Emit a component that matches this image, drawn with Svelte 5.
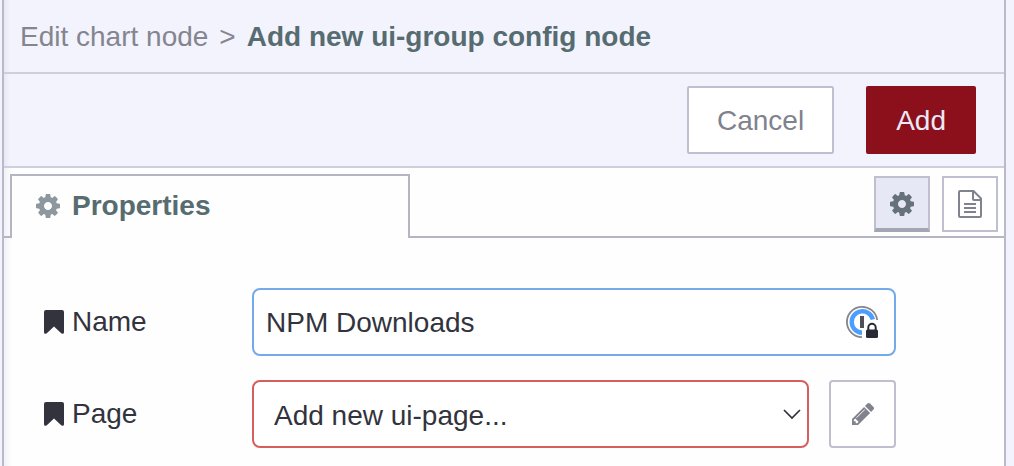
<script>
  let name = $state('NPM Downloads');
  let page = $state('new');
  let view = $state('properties');
</script>

{#snippet cog()}
  <svg class="cog" viewBox="128 128 1536 1536" aria-hidden="true">
    <path d="M1152 896q0-106-75-181t-181-75-181 75-75 181 75 181 181 75 181-75 75-181zm512-109v222q0 12-8 23t-20 13l-185 28q-19 54-39 91 35 50 107 138 10 12 10 25t-9 23q-27 37-99 108t-94 71q-12 0-26-9l-138-108q-44 23-91 38-16 136-29 186-7 28-36 28h-222q-14 0-24.500-8.500t-11.500-21.500l-28-184q-49-16-90-37l-141 107q-10 9-25 9-14 0-25-11-126-114-165-168-7-10-7-23 0-12 8-23 15-21 51-66.500t54-70.500q-27-50-41-99l-183-27q-13-2-21-12.500t-8-23.500v-222q0-12 8-23t19-13l186-28q14-46 39-92-40-57-107-138-10-12-10-24 0-10 9-23 26-36 98.500-107.500t94.500-71.500q13 0 26 10l138 107q44-23 91-38 16-136 29-186 7-28 36-28h222q14 0 24.500 8.500t11.500 21.500l28 184q49 16 90 37l142-107q9-9 24-9 13 0 25 10 129 119 165 170 7 8 7 22 0 12-8 23-15 21-51 66.500t-54 70.500q26 50 41 98l183 28q13 2 21 12.500t8 23.500z" />
  </svg>
{/snippet}

{#snippet bookmark()}
  <svg class="bookmark" viewBox="0 0 20 24" aria-hidden="true">
    <path d="M2 0h16q2 0 2 2v20.300q0 1.700-1.700 1.500-.6-.1-1.100-.5L10 16.500l-7.200 6.800q-.5.400-1.100.5Q0 24 0 22.300V2q0-2 2-2z" />
  </svg>
{/snippet}

<main class="tray">
  <header class="crumbs">
    <span>Edit chart node</span>
    <span>&gt;</span>
    <b>Add new ui-group config node</b>
  </header>

  <div class="toolbar">
    <button class="action" type="button">Cancel</button>
    <button class="action primary" type="button">Add</button>
  </div>

  <nav class="tabs">
    <span class="edge"></span>
    <a class="tab" href="#properties">{@render cog()}Properties</a>
    <div class="tools">
      <button class="tool" class:selected={view === 'properties'} type="button" aria-label="Properties" onclick={() => (view = 'properties')}>
        {@render cog()}
      </button>
      <button class="tool" class:selected={view === 'description'} type="button" aria-label="Description" onclick={() => (view = 'description')}>
        <svg class="doc" viewBox="0 0 24 28" aria-hidden="true">
          <path d="M2 1h13.500L23 8.500V26q0 1-1 1H2q-1 0-1-1V2q0-1 1-1zM15 1v8q0 1 1 1h7M6 14h12M6 18h12M6 22h12" />
        </svg>
      </button>
    </div>
  </nav>

  <form class="form" id="properties">
    <div class="row">
      <label for="name">{@render bookmark()}Name</label>
      <div class="field">
        <input id="name" class="control" type="text" autocomplete="off" bind:value={name} />
        <svg class="vault" viewBox="0 0 34 34" aria-hidden="true">
          <path class="ring" d="M31.200 15A15.200 15.200 0 1 0 16 32.200" />
          <path class="disc" d="M26.800 14.500A10.700 10.700 0 1 0 16 27.700" />
          <path class="slot" d="M14 11h4v12h-4z" />
          <path class="shackle" d="M22.300 25v-2.500a3.700 3.700 0 0 1 7.400 0V25" />
          <rect class="body" x="20" y="24.500" width="12" height="8.500" rx="1.500" />
        </svg>
      </div>
    </div>

    <div class="row">
      <label for="page">{@render bookmark()}Page</label>
      <div class="field">
        <select id="page" class="control invalid" bind:value={page}>
          <option value="new">Add new ui-page...</option>
        </select>
        <svg class="chevron" viewBox="0 0 18 12" aria-hidden="true"><path d="M1 2l8 8 8-8" /></svg>
      </div>
      <button class="edit" type="button" aria-label="Edit page">
        <svg viewBox="128 149 1515 1515" aria-hidden="true">
          <path d="M491 1536l91-91-235-235-91 91v107h128v128h107zm523-928q0-22-22-22-10 0-17 7l-542 542q-7 7-7 17 0 22 22 22 10 0 17-7l542-542q7-7 7-17zm-54-192l416 416-832 832h-416v-416zm683 96q0 53-37 90l-166 166-416-416 166-165q36-38 90-38 53 0 91 38l235 234q37 39 37 91z" />
        </svg>
      </button>
    </div>
  </form>
</main>

<style>
  :global(body) {
    margin: 0;
    background: #f3f3fd;
  }

  .tray {
    box-sizing: border-box;
    min-height: 100vh;
    margin: 0 8px 0 2px;
    border: solid #b9b9c9;
    border-width: 0 2px;
    background: linear-gradient(to right, #f0f0f8, #fefefe 8px);
    color: #32333d;
    font: 28px/32px "Liberation Sans", Arial, sans-serif;
  }

  svg {
    display: block;
    flex: none;
    fill: currentColor;
  }

  button,
  input,
  select {
    box-sizing: border-box;
    margin: 0;
    font: inherit;
    color: inherit;
    outline: none;
  }

  button {
    display: flex;
    align-items: center;
    justify-content: center;
    padding: 0;
    border: 2px solid #bfbfcf;
    background: #fff;
    color: #80828d;
    cursor: pointer;
  }

  .crumbs,
  .toolbar {
    border-bottom: 2px solid #cfcfdb;
    background: linear-gradient(to right, #e8e8f6, #f3f3fd 6px);
  }

  .crumbs {
    display: flex;
    gap: 11px;
    padding: 21px 16px 19px;
    color: #85858f;
  }

  .crumbs b {
    color: #566c70;
  }

  .toolbar {
    display: flex;
    justify-content: flex-end;
    gap: 32px;
    padding: 12px 28px;
  }

  .action {
    height: 68px;
    padding: 2px 28px 0;
    border-radius: 2px;
  }

  .primary {
    border-color: #8c101c;
    background: #8c101c;
    color: #e9e9f7;
  }

  .tabs {
    display: flex;
    align-items: stretch;
    padding-top: 6px;
  }

  .edge {
    width: 6px;
    border-bottom: 2px solid #b5b5c3;
  }

  .tab {
    box-sizing: border-box;
    display: flex;
    align-items: center;
    gap: 12px;
    width: 40%;
    height: 64px;
    padding: 0 24px 2px;
    border: solid #b5b5c3;
    border-width: 2px 2px 0;
    background: #fefefe;
    color: #566c70;
    font-weight: bold;
    text-decoration: none;
  }

  .cog {
    width: 24px;
    height: 24px;
  }

  .tab .cog {
    color: #8d989e;
  }

  .tools {
    display: flex;
    flex: 1;
    justify-content: flex-end;
    gap: 12px;
    padding: 2px 6px 4px;
    border-bottom: 2px solid #b5b5c3;
  }

  .tool {
    width: 56px;
    height: 56px;
  }

  .tool.selected {
    padding-top: 2px;
    border-bottom: 4px solid #a3a6b3;
    background: #e7e8f6;
    color: #65727b;
  }

  .doc {
    width: 24px;
    height: 28px;
    fill: none;
    stroke: currentColor;
    stroke-width: 2;
  }

  .form {
    display: grid;
    gap: 24px;
    padding: 50px 108px 18px 40px;
  }

  .row {
    display: flex;
    align-items: center;
  }

  label {
    display: flex;
    align-items: center;
    gap: 8px;
    width: 208px;
  }

  .bookmark {
    width: 20px;
    height: 24px;
  }

  .field {
    display: grid;
    flex: 1;
    align-items: center;
  }

  .field > * {
    grid-area: 1 / 1;
  }

  .control {
    width: 100%;
    height: 68px;
    padding: 2px 52px 0 12px;
    border: 2px solid #76a9ea;
    border-radius: 8px;
    background: #fff;
  }

  .invalid {
    appearance: none;
    padding: 4px 52px 0 20px;
    border-color: #d55f5f;
  }

  .vault,
  .chevron {
    justify-self: end;
    pointer-events: none;
  }

  .vault {
    width: 34px;
    height: 34px;
    margin-right: 16px;
  }

  .ring,
  .disc,
  .shackle {
    fill: none;
  }

  .ring {
    stroke: #85858b;
    stroke-width: 1.8;
  }

  .disc {
    stroke: #4b9dff;
    stroke-width: 4.4;
  }

  .slot {
    fill: #50505a;
  }

  .shackle {
    stroke: #292a35;
    stroke-width: 2;
  }

  .body {
    fill: #292a35;
  }

  .chevron {
    width: 18px;
    height: 12px;
    margin-right: 8px;
    fill: none;
    stroke: #32333d;
    stroke-width: 1.7;
  }

  .edit {
    width: 67px;
    height: 68px;
    margin-left: 20px;
    border-radius: 4px;
  }

  .edit svg {
    width: 22px;
    height: 22px;
  }
</style>
